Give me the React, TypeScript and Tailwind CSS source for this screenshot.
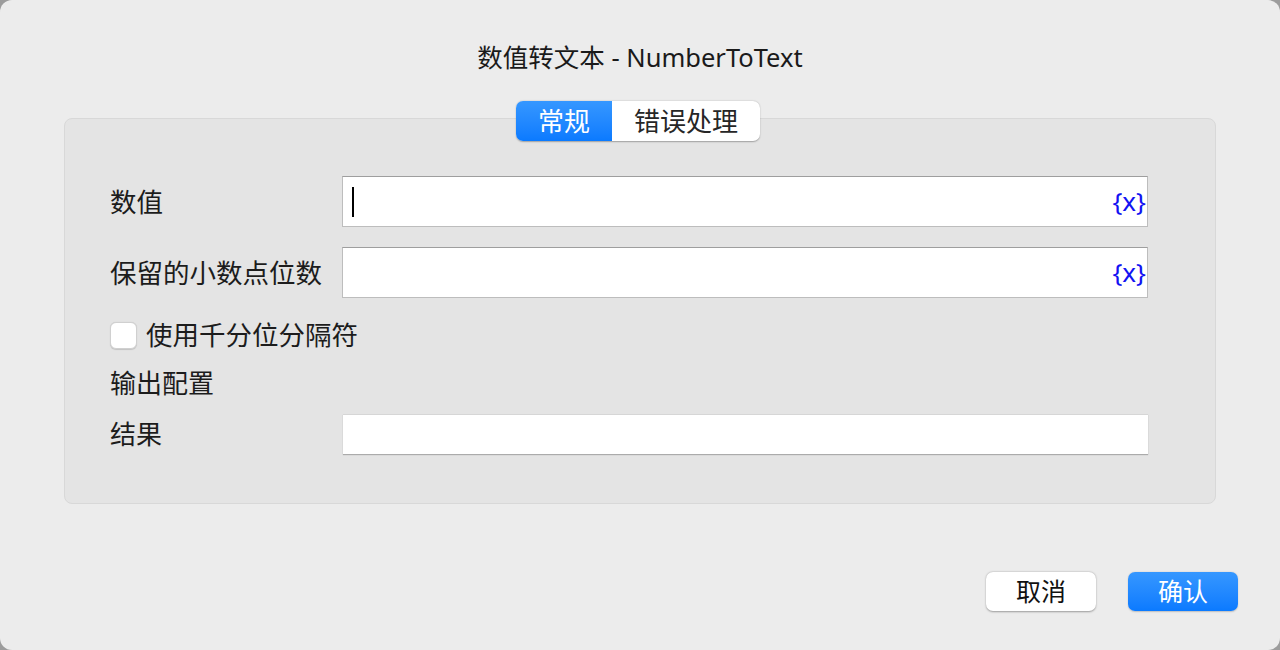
import React from 'react';

const FONT = "font-['Noto_Sans','Noto_Sans_CJK_SC',sans-serif]";

const VarButton: React.FC = () => (
  <span className="text-[26px] leading-none text-[#1212f2] pr-[1px] pb-[2px]">{'{x}'}</span>
);

const FieldRow: React.FC<{ label: string; cursor?: boolean; mt?: string }> = ({ label, cursor, mt }) => (
  <div className={`flex items-center ${mt ?? ''}`}>
    <div className="w-[232px] text-[26.5px] leading-[34px] text-[#1c1c1c]">{label}</div>
    <div className="flex h-[51px] w-[806px] items-center justify-between border border-[#bdbdbd] border-t-[#9e9e9e] bg-white pl-[9px]">
      {cursor ? <span className="h-[30px] w-[2px] bg-black" /> : <span />}
      <VarButton />
    </div>
  </div>
);

export default function App() {
  return (
    <div className={`h-[650px] w-[1280px] bg-[#9c9c9c] ${FONT}`}>
      <div className="flex h-full w-full flex-col rounded-[12px] bg-[#ececec]">
        {/* 标题 */}
        <div className="pt-[40px] text-center text-[25.5px] leading-[34px] text-[#1a1a1a]">
          数值转文本 - NumberToText
        </div>

        {/* 选项卡 + 面板 */}
        <div className="relative mx-[64px] mt-[44px] h-[386px] w-[1152px] rounded-[8px] border border-[#d8d8d8] bg-[#e4e4e4]">
          <div className="absolute left-[451px] top-[-18px] flex h-[40px] overflow-hidden rounded-[7px] bg-white shadow-[0_0.5px_1.5px_rgba(0,0,0,0.3)]">
            <div className="flex w-[96px] items-center justify-center bg-gradient-to-b from-[#3597ff] to-[#0a7aff] text-[26px] leading-none text-white">
              常规
            </div>
            <div className="flex w-[148px] items-center justify-center text-[26px] leading-none text-[#262626]">
              错误处理
            </div>
          </div>

          <div className="px-[45px] pt-[57px]">
            <FieldRow label="数值" cursor />
            <FieldRow label="保留的小数点位数" mt="mt-[20px]" />

            <div className="mt-[20px] flex items-center">
              <span className="h-[27px] w-[27px] rounded-[6px] border border-[#d0d0d0] bg-white shadow-[0_0.5px_1px_rgba(0,0,0,0.15)]" />
              <span className="ml-[9px] text-[26.5px] leading-[34px] text-[#1c1c1c]">使用千分位分隔符</span>
            </div>

            <div className="mt-[14px] text-[26px] leading-[34px] text-[#1c1c1c]">输出配置</div>

            <div className="mt-[14px] flex items-center">
              <div className="w-[233px] text-[26px] leading-[34px] text-[#1c1c1c]">结果</div>
              <div className="h-[40px] w-[805px] border-t border-[#d6d6d6] bg-white shadow-[0_1px_1px_rgba(0,0,0,0.25)]" />
            </div>
          </div>
        </div>

        {/* 按钮 */}
        <div className="mt-[68px] flex justify-end gap-[32px] pr-[42px]">
          <button className="h-[39px] w-[110px] rounded-[7px] bg-white text-[25px] leading-none text-[#111] shadow-[0_0.5px_2px_rgba(0,0,0,0.35)]">
            取消
          </button>
          <button className="h-[39px] w-[110px] rounded-[7px] bg-gradient-to-b from-[#3597ff] to-[#0a7aff] text-[25px] leading-none text-white shadow-[0_0.5px_1.5px_rgba(0,0,0,0.2)]">
            确认
          </button>
        </div>
      </div>
    </div>
  );
}
